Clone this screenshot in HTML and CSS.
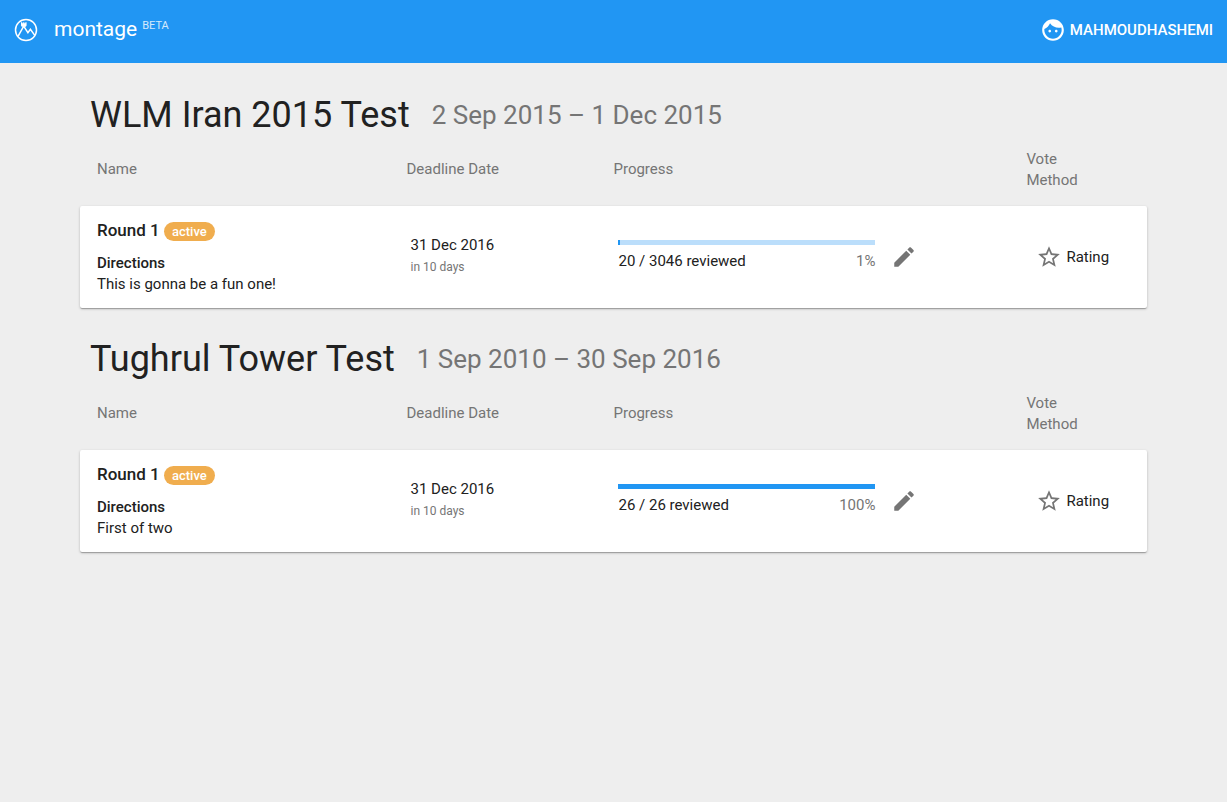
FILE: index.html
```html
<!DOCTYPE html>
<html lang="en">
<head>
<meta charset="utf-8">
<meta name="viewport" content="width=device-width, initial-scale=1">
<title>montage</title>
<link rel="stylesheet" href="styles.css">
</head>
<body>
<svg class="sprite" aria-hidden="true">
  <symbol id="pencil" viewBox="0 0 24 24"><path d="M3 17.25V21h3.75L17.81 9.94l-3.75-3.75L3 17.25zM20.71 7.04c.39-.39.39-1.02 0-1.41l-2.34-2.34c-.39-.39-1.02-.39-1.41 0l-1.83 1.83 3.75 3.75 1.83-1.83z"/></symbol>
  <symbol id="star" viewBox="0 0 24 24"><path d="M22 9.24l-7.19-.62L12 2 9.19 8.63 2 9.24l5.46 4.73L5.82 21 12 17.27 18.18 21l-1.63-7.03L22 9.24zM12 15.4l-3.76 2.27 1-4.28-3.32-2.88 4.38-.38L12 6.1l1.71 4.04 4.38.38-3.32 2.88 1 4.28L12 15.4z"/></symbol>
</svg>
<header class="toolbar">
  <a class="brand" href="#">
    <svg class="logo" viewBox="0 0 24 24" aria-hidden="true">
      <circle cx="12" cy="12" r="10.5"/>
      <path d="M4 18.4 9.7 8.2l4.2 6.4 2.5-3.4 4.400 6.200"/>
      <path class="logo-fill" d="M7 4.300h1.300v1h.9v-1h1.200v1h.9v-1h1.300v3.200l-.7 1.200H7.700L7 7.500z"/>
    </svg>
    <span class="brand-name">montage</span>
    <span class="brand-tag">BETA</span>
  </a>
  <button class="user" type="button">
    <svg class="icon" viewBox="0 0 24 24" aria-hidden="true"><path d="M9 11.75c-.69 0-1.25.56-1.25 1.25s.56 1.25 1.25 1.25 1.25-.56 1.25-1.25-.56-1.25-1.25-1.25zm6 0c-.69 0-1.25.56-1.25 1.25s.56 1.25 1.25 1.25 1.25-.56 1.25-1.25-.56-1.25-1.25-1.25zM12 2C6.48 2 2 6.48 2 12s4.48 10 10 10 10-4.480 10-10S17.520 2 12 2zm0 18c-4.410 0-8-3.590-8-8 0-.29.020-.58.050-.86 2.360-1.050 4.230-2.980 5.210-5.370C11.070 8.330 14.050 10 17.420 10c.78 0 1.530-.09 2.250-.26.210.71.330 1.470.330 2.260 0 4.410-3.590 8-8 8z"/></svg>
    MAHMOUDHASHEMI
  </button>
</header>
<main class="content">
  <section class="campaign">
    <div class="campaign-head">
      <h1 class="campaign-title">WLM Iran 2015 Test</h1>
      <span class="campaign-dates">2 Sep 2015 – 1 Dec 2015</span>
    </div>
    <table class="rounds">
      <colgroup><col class="col-name"><col class="col-date"><col class="col-progress"><col class="col-vote"></colgroup>
      <thead>
        <tr><th class="first">Name</th><th>Deadline Date</th><th>Progress</th><th class="vote-head">Vote Method</th></tr>
      </thead>
      <tbody>
        <tr class="round">
          <td class="first">
            <h2 class="round-name">Round 1 <span class="badge">active</span></h2>
            <h3 class="label">Directions</h3>
            <p class="text">This is gonna be a fun one!</p>
          </td>
          <td class="date">
            <p class="text">31 Dec 2016</p>
            <p class="hint">in 10 days</p>
          </td>
          <td class="progress-cell">
            <div class="progress-row">
              <div class="progress">
                <progress class="bar" value="20" max="3046" aria-label="Reviewed"></progress>
                <div class="counts"><span>20 / 3046 reviewed</span><span class="percent">1%</span></div>
              </div>
              <button class="edit" type="button" aria-label="Edit"><svg class="icon"><use href="#pencil"/></svg></button>
            </div>
          </td>
          <td class="vote"><span class="method"><svg class="icon" aria-hidden="true"><use href="#star"/></svg><span>Rating</span></span></td>
        </tr>
      </tbody>
    </table>
  </section>
  <section class="campaign">
    <div class="campaign-head">
      <h1 class="campaign-title">Tughrul Tower Test</h1>
      <span class="campaign-dates">1 Sep 2010 – 30 Sep 2016</span>
    </div>
    <table class="rounds">
      <colgroup><col class="col-name"><col class="col-date"><col class="col-progress"><col class="col-vote"></colgroup>
      <thead>
        <tr><th class="first">Name</th><th>Deadline Date</th><th>Progress</th><th class="vote-head">Vote Method</th></tr>
      </thead>
      <tbody>
        <tr class="round">
          <td class="first">
            <h2 class="round-name">Round 1 <span class="badge">active</span></h2>
            <h3 class="label">Directions</h3>
            <p class="text">First of two</p>
          </td>
          <td class="date">
            <p class="text">31 Dec 2016</p>
            <p class="hint">in 10 days</p>
          </td>
          <td class="progress-cell">
            <div class="progress-row">
              <div class="progress">
                <progress class="bar" value="26" max="26" aria-label="Reviewed"></progress>
                <div class="counts"><span>26 / 26 reviewed</span><span class="percent">100%</span></div>
              </div>
              <button class="edit" type="button" aria-label="Edit"><svg class="icon"><use href="#pencil"/></svg></button>
            </div>
          </td>
          <td class="vote"><span class="method"><svg class="icon" aria-hidden="true"><use href="#star"/></svg><span>Rating</span></span></td>
        </tr>
      </tbody>
    </table>
  </section>
</main>
</body>
</html>
```
FILE: styles.css
```css
* { box-sizing: border-box; }
body {
  margin: 0;
  background: #eee;
  color: #212121;
  font: 15px/21px Roboto, sans-serif;
}
h1, h2, h3, p { margin: 0; font-weight: 400; }
button { border: 0; padding: 0; background: none; font: inherit; color: inherit; cursor: pointer; }
.sprite { display: none; }
.icon { display: block; flex: none; width: 26px; height: 26px; fill: currentColor; }

.toolbar {
  display: flex;
  align-items: center;
  justify-content: space-between;
  padding: 16px 14px 20px;
  background: #2196f3;
  color: #fff;
}
.brand { display: flex; align-items: center; color: inherit; text-decoration: none; }
.logo { width: 24px; height: 24px; margin-right: 16px; fill: none; stroke: #fff; stroke-width: 1.5; }
.logo .logo-fill { fill: #fff; stroke: none; }
.brand-name { font-size: 21px; line-height: 27px; }
.brand-tag { align-self: flex-start; margin-left: 5px; font-size: 11px; line-height: 19px; opacity: 0.8; }
.user { display: flex; align-items: center; gap: 4px; font-weight: 500; line-height: 26px; }

.content { padding: 29px 80px; }
.campaign { margin-bottom: 28px; }
.campaign-head { display: flex; flex-wrap: wrap; align-items: center; gap: 22px; padding: 0 10px; }
.campaign-title { font-size: 36px; line-height: 46px; }
.campaign-dates { color: #757575; font-size: 26px; line-height: 46px; }

.rounds { width: 100%; table-layout: fixed; border-spacing: 0; }
.col-name { width: 30.6%; }
.col-date { width: 19.4%; }
.col-progress { width: 38.7%; }
.col-vote { width: 11.3%; }
.rounds th { height: 68px; padding: 0 0 5px; color: #757575; font-weight: 400; text-align: left; }
.rounds .vote-head { padding-right: 48px; }
.rounds td { padding: 0; }
.rounds .first { padding-left: 17px; }
.round { background: #fff; border-radius: 2px; box-shadow: 0 1px 3px rgba(0,0,0,.2), 0 1px 1px rgba(0,0,0,.14), 0 2px 1px -1px rgba(0,0,0,.12); }
.round td { height: 102px; }
.round td:first-child { border-radius: 2px 0 0 2px; }
.round td:last-child { border-radius: 0 2px 2px 0; }

.round-name { margin-bottom: 12px; font-size: 17px; font-weight: 500; line-height: 22px; }
.badge { display: inline-block; padding: 0 8px; border-radius: 10px; background: #f0ad4e; color: #fff; font-size: 13px; line-height: 19px; }
.label { font-size: 15px; font-weight: 500; }
.rounds .date { padding-left: 4px; }
.hint { color: #757575; font-size: 12px; line-height: 23px; }
.rounds .progress-cell { padding-left: 5px; }
.progress-row { display: flex; align-items: center; gap: 16px; }
.progress { width: 63%; padding-bottom: 2px; }
.bar { display: block; width: 100%; height: 5px; margin-bottom: 6px; border: 0; appearance: none; background: #bbdefb; }
.bar::-webkit-progress-bar { background: #bbdefb; }
.bar::-webkit-progress-value { background: #2196f3; }
.counts { display: flex; justify-content: space-between; }
.percent { color: #757575; }
.edit { color: #757575; }
.rounds .vote { padding-left: 10px; }
.method { display: flex; align-items: center; gap: 4px; }
.method .icon { color: #757575; }
```
